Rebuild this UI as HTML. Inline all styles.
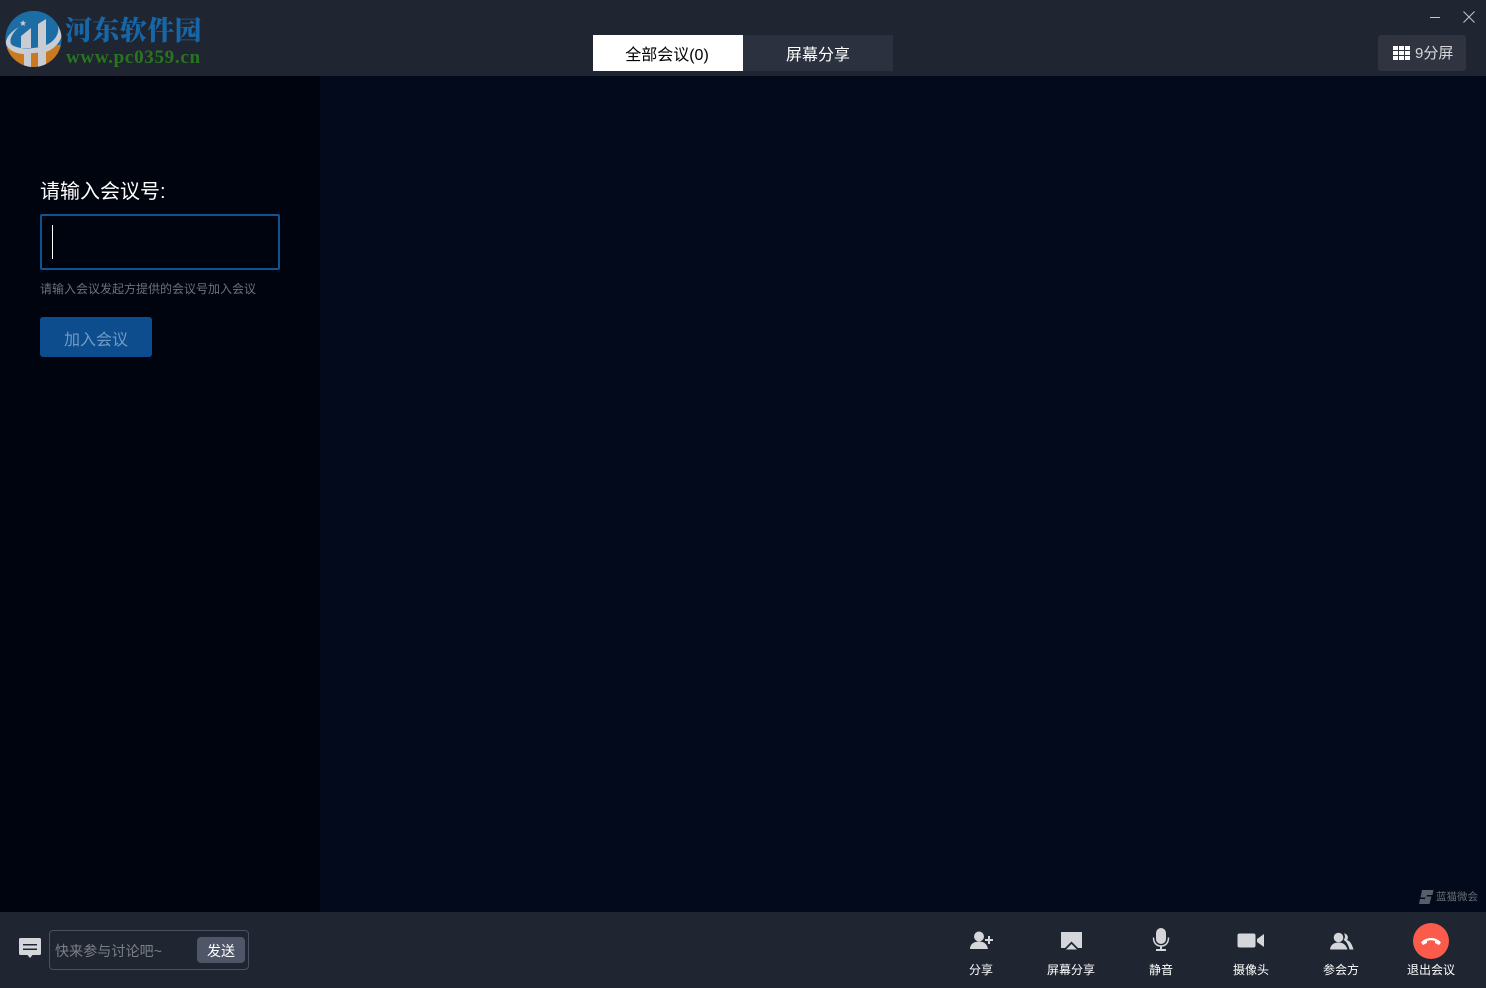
<!DOCTYPE html>
<html><head><meta charset="utf-8"><style>
html,body{margin:0;padding:0;width:1486px;height:988px;overflow:hidden;background:#020a1c}
body{font-family:"Liberation Sans","Noto Sans CJK SC",sans-serif;position:relative;color:#fff}
div,span,svg{position:absolute;box-sizing:border-box}
.t{white-space:nowrap;line-height:1}
.lab{font-size:12px;top:963px;width:90px;text-align:center;color:#fff;white-space:nowrap;line-height:14px}
</style></head><body>
<div style="left:0;top:0;width:1486px;height:76px;background:#1f2531"></div>
<svg style="left:0;top:5px" width="70" height="70" viewBox="0 0 70 70">
<defs><clipPath id="c"><circle cx="33.500" cy="34" r="28"/></clipPath></defs>
<circle cx="33.500" cy="34" r="28" fill="#1c6ca6"/>
<g clip-path="url(#c)">
<path d="M0 40H70V70H0Z" fill="#c9791f"/>
<path d="M0 0H70V30L46 47L24 49L6 42H0Z" fill="#1c6ca6"/>
<path d="M19 22C10 27 5 34 6 39C8 46 18 49 24 49L46 47C54 44 60 38 62 30L58 20C60 29 54 37 46 40C36 44 20 45 12 40C8 36 12 28 19 22Z" fill="#c9ccd2"/>
<path d="M21 31L31 23V43H21Z" fill="#c9ccd2"/>
<path d="M38 19L46 14V42H38Z" fill="#c9ccd2"/>
<rect x="24" y="47" width="7" height="16" fill="#c9ccd2"/>
<rect x="38" y="45" width="8" height="18" fill="#c9ccd2"/>
</g>
<path d="M23 15l.9 2.200h2.300l-1.800 1.500.6 2.300-2-1.300-2 1.300.6-2.300-1.800-1.500h2.300z" fill="#c9ccd2"/>
</svg>
<div class="t" style="left:65px;top:15px;font-family:'Noto Serif CJK SC','Liberation Serif',serif;font-weight:900;font-size:27px;letter-spacing:.4px;color:#1766a8">河东软件园</div>
<div class="t" style="left:66px;top:48px;font-family:'Liberation Serif',serif;font-weight:700;font-size:19px;letter-spacing:.7px;color:#27761f">www.pc0359.cn</div>

<div style="left:593px;top:35px;width:150px;height:36px;background:#fff"></div>
<div class="t" style="left:592px;top:47px;width:150px;text-align:center;font-size:16px;line-height:16px;padding-top:.5px;color:#000">全部会议(0)</div>
<div style="left:743px;top:35px;width:150px;height:36px;background:#2b313e"></div>
<div class="t" style="left:743px;top:47px;width:150px;text-align:center;font-size:16px;line-height:16px;padding-top:.5px;color:#fff">屏幕分享</div>

<div style="left:1430px;top:17px;width:10px;height:1px;background:#c4c6ca"></div>
<svg style="left:1462px;top:10px" width="14" height="14" viewBox="0 0 14 14"><path d="M1.500 1.500L12.500 12.500M12.500 1.500L1.500 12.500" stroke="#c4c6ca" stroke-width="1" fill="none"/></svg>
<div style="left:1378px;top:35px;width:88px;height:36px;border-radius:3px;background:#2f3440"></div>
<svg style="left:1393px;top:46px" width="17" height="14" viewBox="0 0 17 14" fill="#fff"><rect width="5" height="4"/><rect x="6" width="5" height="4"/><rect x="12" width="5" height="4"/><rect y="5" width="5" height="4"/><rect x="6" y="5" width="5" height="4"/><rect x="12" y="5" width="5" height="4"/><rect y="10" width="5" height="4"/><rect x="6" y="10" width="5" height="4"/><rect x="12" y="10" width="5" height="4"/></svg>
<div class="t" style="left:1415px;top:46px;font-size:15px;color:#d6d8db">9分屏</div>

<div style="left:0;top:76px;width:320px;height:836px;background:#00040e"></div>
<div class="t" style="left:40px;top:182px;font-size:20px;color:#fff">请输入会议号:</div>
<div style="left:40px;top:214px;width:240px;height:56px;border:2px solid #0f5394;border-radius:2px;background:#00040e"></div>
<div style="left:52px;top:225px;width:1px;height:34px;background:#fff"></div>
<div class="t" style="left:40px;top:283px;font-size:12px;color:#6f7177">请输入会议发起方提供的会议号加入会议</div>
<div style="left:40px;top:317px;width:112px;height:40px;border-radius:3px;background:#0d4d8e"></div>
<div class="t" style="left:40px;top:333px;width:112px;text-align:center;font-size:16px;color:#6f9dc7">加入会议</div>

<svg style="left:1418px;top:889px" width="16" height="16" viewBox="0 0 16 16"><path d="M4 1H15.500L14.500 6H9L8.500 7.500H13.500L11.500 15H1L2 10H7L7.500 8.500H2.500Z" fill="#585d67"/></svg>
<div class="t" style="left:1436px;top:892px;font-size:10.500px;color:#6a6e76">蓝猫微会</div>

<div style="left:0;top:912px;width:1486px;height:76px;background:#1f2531"></div>
<svg style="left:18px;top:936px" width="24" height="24" viewBox="0 0 24 24"><path d="M2.500 2H21.500A1.500 1.500 0 0 1 23 3.500V17.500A1.500 1.500 0 0 1 21.500 19H14.500L12 22L9.500 19H2.500A1.500 1.500 0 0 1 1 17.500V3.500A1.500 1.500 0 0 1 2.500 2Z" fill="#d4d6da"/><rect x="5" y="8" width="14" height="1.500" fill="#1f2531"/><rect x="5" y="12.500" width="14" height="1.500" fill="#1f2531"/></svg>
<div style="left:49px;top:930px;width:200px;height:40px;border:1px solid #4b5162;border-radius:4px"></div>
<div class="t" style="left:55px;top:944px;font-size:14px;letter-spacing:.1px;color:#7d8087">快来参与讨论吧~</div>
<div style="left:197px;top:937px;width:48px;height:26px;border-radius:4px;background:#4f5667"></div>
<div class="t" style="left:197px;top:944px;width:48px;text-align:center;font-size:14px;color:#fff">发送</div>

<svg style="left:969px;top:930px" width="25" height="20" viewBox="0 0 25 20" fill="#d4d6da"><circle cx="10" cy="6.500" r="5"/><path d="M1 19C1 14 5 11.500 10 11.500S18 14 19 19Z"/><rect x="16" y="9" width="8" height="2"/><rect x="19" y="6" width="2" height="8"/></svg>
<div class="lab" style="left:936px">分享</div>
<svg style="left:1060px;top:931px" width="23" height="19" viewBox="0 0 23 19"><path d="M1 1H22V17H18L11.500 10.500L5 17H1Z" fill="#d4d6da"/><path d="M6 18.500L11.500 13L17 18.500Z" fill="#d4d6da"/></svg>
<div class="lab" style="left:1026px">屏幕分享</div>
<svg style="left:1152px;top:927px" width="18" height="25" viewBox="0 0 18 25"><rect x="4" y="1" width="10" height="16" rx="5" fill="#d4d6da"/><path d="M1.500 10.500C1.500 16 4.500 19 9 19S16.500 16 16.500 10.500" fill="none" stroke="#d4d6da" stroke-width="1.500"/><rect x="8" y="19" width="2" height="3" fill="#d4d6da"/><rect x="4" y="22" width="10" height="2" fill="#d4d6da"/></svg>
<div class="lab" style="left:1116px">静音</div>
<svg style="left:1237px;top:933px" width="28" height="15" viewBox="0 0 28 15" fill="#d4d6da"><rect x="0.500" y="0.500" width="18" height="14" rx="2"/><path d="M20 6L27 1V14L20 9Z"/></svg>
<div class="lab" style="left:1206px">摄像头</div>
<svg style="left:1329px;top:932px" width="25" height="18" viewBox="0 0 25 18" fill="#d4d6da"><path d="M15 1.500a4 4 0 0 1 3 6.500c3 1 5 4 6.500 9.500h-4C19 12 17 9 14.500 8A5 5 0 0 0 15 1.500Z"/><circle cx="9.500" cy="5.500" r="4.800"/><path d="M1 17.500C1.500 13 4.500 10.500 9.500 10.500S17 13 18.500 17.500Z"/></svg>
<div class="lab" style="left:1296px">参会方</div>
<div style="left:1413px;top:923px;width:36px;height:36px;border-radius:50%;background:#fb5b4b"></div>
<svg style="left:1420px;top:935px" width="22" height="11" viewBox="0 0 22 11"><path d="M1 7.500C6 1.500 16 1.500 21 7.500L19 10L15 8V6C12.500 5 9.500 5 7 6V8L3 10Z" fill="#fff"/></svg>
<div class="lab" style="left:1386px">退出会议</div>
</body></html>
